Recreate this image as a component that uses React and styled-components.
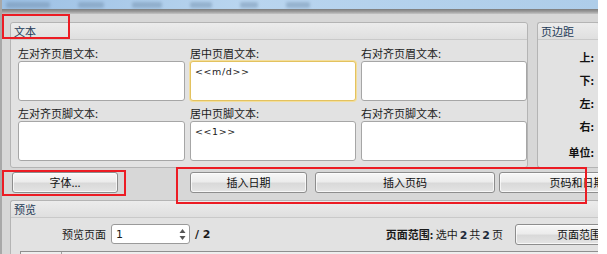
import React from 'react';
import styled, { createGlobalStyle } from 'styled-components';

const GlobalStyle = createGlobalStyle`
  html, body {
    margin: 0;
    padding: 0;
    background: #ffffff;
  }
  body {
    font-family: "Noto Sans CJK SC", "Noto Sans", sans-serif;
    font-size: 11px;
    color: #1a1a1a;
  }
`;

const Page = styled.div`
  width: 607px;
  height: 254px;
  overflow: hidden;
  background: #ffffff;
`;

const Window = styled.div`
  position: relative;
  width: 598px;
  height: 254px;
  overflow: hidden;
  display: flex;
  flex-direction: column;
  background: #d7d7d7;
  border-left: 2px solid #a8a8a8;
  box-sizing: border-box;
`;

const TitleBar = styled.div`
  height: 9px;
  flex: none;
  background: linear-gradient(90deg, #9cc0e4 0%, #b9d5ef 40%, #aecde9 100%);
  display: flex;
  align-items: flex-end;
  gap: 28px;
  padding-left: 4px;
  overflow: hidden;
`;

const TitleBlur = styled.span`
  display: block;
  width: ${(p) => p.w}px;
  height: 6px;
  margin-bottom: 1px;
  border-radius: 2px;
  background: #6d8aa8;
  opacity: 0.45;
  filter: blur(1.5px);
`;

const TitleShadow = styled.div`
  height: 5px;
  flex: none;
  background: linear-gradient(#7c7c7c, #9a9a9a 50%, #c4c4c4);
`;

const Body = styled.div`
  flex: 1;
  display: flex;
  flex-direction: column;
  padding: 8px 0 0 8px;
`;

const TopRow = styled.div`
  display: flex;
  gap: 9px;
  height: 146px;
`;

const Group = styled.div`
  display: flex;
  flex-direction: column;
  background: #e2e2e2;
  border: 1px solid #b4b4b4;
  border-radius: 3px;
  box-sizing: border-box;
  width: ${(p) => (p.w ? `${p.w}px` : 'auto')};
  flex: ${(p) => (p.w ? 'none' : '1')};
  ${(p) => p.open && 'border-right: none; border-radius: 3px 0 0 3px;'}
`;

const GroupHeader = styled.div`
  height: 16px;
  flex: none;
  line-height: 16px;
  padding-left: 3px;
  color: #233a56;
  font-size: 11px;
  background: linear-gradient(#ececec, #dfdfdf);
  border-bottom: 1px solid #c9c9c9;
  border-radius: 3px 3px 0 0;
`;

const FieldGrid = styled.div`
  display: grid;
  grid-template-columns: 167px 166px 166px;
  column-gap: 5px;
  row-gap: 5px;
  padding: 6px 0 0 7px;
`;

const Field = styled.div`
  display: flex;
  flex-direction: column;
`;

const FieldLabel = styled.div`
  height: 14px;
  line-height: 14px;
  margin-bottom: 1px;
  font-size: 11px;
  color: #1c1c1c;
`;

const TextBox = styled.div`
  height: 40px;
  box-sizing: border-box;
  background: #ffffff;
  border: 1px solid ${(p) => (p.focus ? '#e3c25f' : '#a6a6a6')};
  box-shadow: ${(p) => (p.focus ? '0 0 0 1px #f3de9c' : 'none')};
  border-radius: 3px;
  padding: 3px 4px;
  font-family: "DejaVu Sans", "Noto Sans", sans-serif;
  font-size: 9.5px;
  letter-spacing: 0.6px;
  line-height: 13px;
  color: #222;
`;

const MarginList = styled.div`
  display: flex;
  flex-direction: column;
  align-items: flex-end;
  padding: 10px 4px 0 0;
  gap: 9px;
`;

const MarginLabel = styled.div`
  height: 14px;
  line-height: 14px;
  font-size: 11px;
  font-weight: 700;
  color: #111;
  margin-top: ${(p) => p.mt || 0}px;
`;

const ButtonRow = styled.div`
  display: flex;
  align-items: center;
  height: 21px;
  margin-top: 4px;
  padding-left: 2px;
`;

const Button = styled.div`
  flex: none;
  width: ${(p) => p.w}px;
  height: 21px;
  margin-left: ${(p) => p.ml || 0}px;
  box-sizing: border-box;
  border: 1px solid #8d8d8d;
  border-radius: 3px;
  background: linear-gradient(#f7f7f7 0%, #ececec 45%, #d9d9d9 55%, #e4e4e4 100%);
  box-shadow: inset 0 0 0 1px rgba(255, 255, 255, 0.7);
  display: flex;
  align-items: center;
  justify-content: center;
  font-size: 11px;
  color: #111;
  line-height: 1;
  white-space: nowrap;
`;

const Preview = styled(Group)`
  margin-top: 7px;
  flex: 1;
  border-bottom: none;
  border-right: none;
  border-radius: 3px 0 0 0;
`;

const PreviewRow = styled.div`
  display: flex;
  align-items: center;
  height: 24px;
  margin-top: 4px;
  padding-left: 51px;
`;

const PlainLabel = styled.span`
  font-size: 11px;
  color: #1a1a1a;
  margin-right: 5px;
`;

const Spin = styled.div`
  width: 79px;
  height: 20px;
  box-sizing: border-box;
  border: 1px solid #9a9a9a;
  border-radius: 3px;
  background: #fff;
  display: flex;
  align-items: center;
  justify-content: space-between;
  padding: 0 3px 0 4px;
  font-family: "DejaVu Sans", sans-serif;
  font-size: 11px;
`;

const Total = styled.span`
  font-family: "DejaVu Sans", sans-serif;
  font-weight: 700;
  font-size: 11px;
  margin-left: 5px;
`;

const RangeText = styled.span`
  margin-left: auto;
  font-size: 11px;
  color: #1a1a1a;
  white-space: nowrap;
  b {
    font-weight: 700;
  }
  .n {
    font-family: "DejaVu Sans", sans-serif;
    font-weight: 700;
    color: #1d2a3a;
    margin: 0 2px;
  }
`;

const RangeButton = styled(Button)`
  justify-content: flex-start;
  padding-left: 41px;
  margin-left: 12px;
  margin-right: -12px;
`;

const TableHead = styled.div`
  display: flex;
  margin-top: 5px;
  margin-left: 9px;
  height: 6px;
  border-top: 1px solid #8f8f8f;
  border-left: 1px solid #8f8f8f;
  background: #eeeeee;
`;

const HeadCell = styled.div`
  width: 40px;
  border-right: 1px solid #a0a0a0;
`;

const Mark = styled.div`
  position: absolute;
  border: 2px solid #ec1c24;
  box-sizing: border-box;
  pointer-events: none;
`;

const SpinArrows = () => (
  <svg width="7" height="13" viewBox="0 0 7 13">
    <path d="M3.5 1 L6.5 5 H0.5 Z" fill="#555" />
    <path d="M3.5 12 L6.5 8 H0.5 Z" fill="#555" />
  </svg>
);

const headerFields = [
  { label: '左对齐页眉文本:', value: '' },
  { label: '居中页眉文本:', value: '<<m/d>>', focus: true },
  { label: '右对齐页眉文本:', value: '' },
  { label: '左对齐页脚文本:', value: '' },
  { label: '居中页脚文本:', value: '<<1>>' },
  { label: '右对齐页脚文本:', value: '' },
];

const margins = ['上:', '下:', '左:', '右:', '单位:'];

const App = () => {
  return (
    <Page>
      <GlobalStyle />
      <Window>
        <TitleBar>
          <TitleBlur w={44} />
          <TitleBlur w={26} />
          <TitleBlur w={30} />
          <TitleBlur w={22} />
          <TitleBlur w={18} />
          <TitleBlur w={24} />
        </TitleBar>
        <TitleShadow />
        <Body>
          <TopRow>
            <Group w={518}>
              <GroupHeader>文本</GroupHeader>
              <FieldGrid>
                {headerFields.map((f, i) => (
                  <Field key={i}>
                    <FieldLabel>{f.label}</FieldLabel>
                    <TextBox focus={f.focus}>{f.value}</TextBox>
                  </Field>
                ))}
              </FieldGrid>
            </Group>
            <Group open>
              <GroupHeader>页边距</GroupHeader>
              <MarginList>
                {margins.map((m, i) => (
                  <MarginLabel key={i} mt={i === 4 ? 3 : 0}>{m}</MarginLabel>
                ))}
              </MarginList>
            </Group>
          </TopRow>

          <ButtonRow>
            <Button w={106}>字体...</Button>
            <Button w={117} ml={72}>插入日期</Button>
            <Button w={180} ml={8}>插入页码</Button>
            <Button w={156} ml={4}>页码和日期</Button>
          </ButtonRow>

          <Preview>
            <GroupHeader>预览</GroupHeader>
            <PreviewRow>
              <PlainLabel>预览页面</PlainLabel>
              <Spin>
                <span>1</span>
                <SpinArrows />
              </Spin>
              <Total>/ 2</Total>
              <RangeText>
                <b>页面范围:</b> 选中<span className="n">2</span>共<span className="n">2</span>页
              </RangeText>
              <RangeButton w={95}>页面范围</RangeButton>
            </PreviewRow>
            <TableHead>
              <HeadCell />
            </TableHead>
          </Preview>
        </Body>

        <Mark style={{ left: 0, top: 14, width: 68, height: 25 }} />
        <Mark style={{ left: 0, top: 170, width: 124, height: 26 }} />
        <Mark style={{ left: 174, top: 167, width: 411, height: 37 }} />
      </Window>
    </Page>
  );
};

export default App;
